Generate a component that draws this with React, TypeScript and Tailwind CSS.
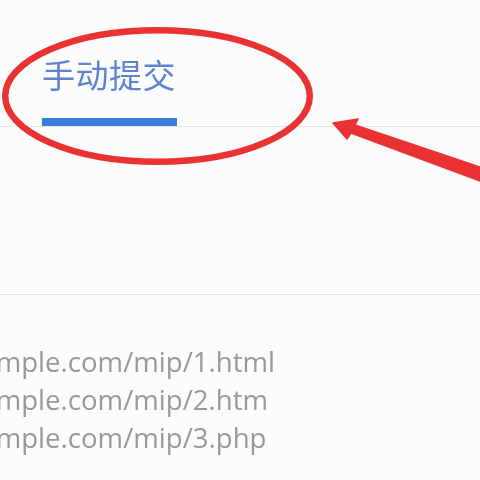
import React from "react";

const urls = [
  "http://www.example.com/mip/1.html",
  "http://www.example.com/mip/2.htm",
  "http://www.example.com/mip/3.php",
];

export default function App() {
  return (
    <div className="relative w-[480px] h-[480px] overflow-hidden bg-[#fcfcfc]">
      <div className="flex flex-col border-b border-[#e6e6e6]">
        <div className="flex flex-col items-start pl-[42px] pt-[58px]">
          <div
            className="text-[33px] leading-[33px] text-[#5f83d3] tracking-[0.5px] blur-[0.3px]"
            style={{ fontFamily: '"Noto Sans CJK SC", "Noto Sans", sans-serif' }}
          >
            手动提交
          </div>
          <div className="mt-[27px] h-[8px] w-[135px] bg-[#3b7de0]" />
        </div>
      </div>
      <div className="h-[168px] border-b border-[#ecdcdc]" />
      <div
        className="mt-[47px] flex flex-col ml-[-202px] text-[27.6px] leading-[38px] text-[#999999] whitespace-nowrap blur-[0.35px]"
        style={{ fontFamily: '"Open Sans", "Noto Sans", sans-serif' }}
      >
        {urls.map((u) => (
          <div key={u}>{u}</div>
        ))}
      </div>
      <svg
        className="absolute inset-0 pointer-events-none"
        width="480"
        height="480"
        viewBox="0 0 480 480"
      >
        <ellipse
          cx="157.5"
          cy="96"
          rx="152.3"
          ry="65.8"
          fill="none"
          stroke="#ea3232"
          strokeWidth="6.5"
        />
        <polygon
          points="333,123 358,119 355,125 480,167 480,181 351,133 347,139"
          fill="#ea3232"
          stroke="#ea3232"
          strokeWidth="1.5"
          strokeLinejoin="round"
        />
      </svg>
    </div>
  );
}
